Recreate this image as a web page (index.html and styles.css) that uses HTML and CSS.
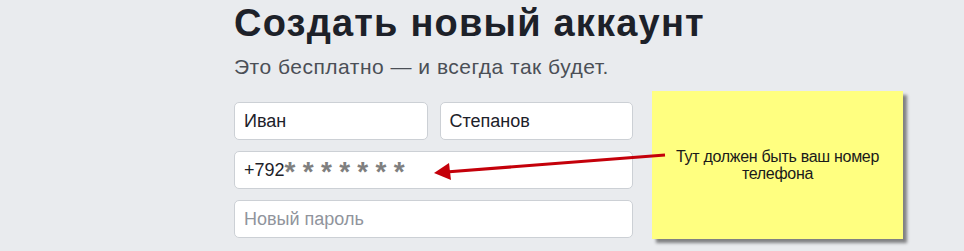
FILE: index.html
```html
<!DOCTYPE html>
<html lang="ru">
<head>
  <meta charset="UTF-8">
  <title>Создать новый аккаунт</title>
  <link rel="stylesheet" href="styles.css">
</head>
<body>
  <div class="signup">
    <h1>Создать новый аккаунт</h1>
    <p class="lead">Это бесплатно — и всегда так будет.</p>

    <div class="form">
      <div class="row">
        <div class="field">Иван</div>
        <div class="field">Степанов</div>
      </div>
      <div class="field">+792<span class="mask">*******</span></div>
      <div class="field placeholder">Новый пароль</div>
    </div>
  </div>

  <!-- sticky note with the hint -->
  <div class="note">
    <p>Тут должен быть ваш номер телефона</p>
  </div>

  <svg class="arrow" width="964" height="251" viewBox="0 0 964 251">
    <line x1="665" y1="155" x2="446" y2="172" stroke="#c4000a" stroke-width="3"/>
    <polygon points="434,173 449,163 451,180" fill="#c4000a"/>
  </svg>
</body>
</html>
```

FILE: styles.css
```css
body {
  margin: 0;
  background: #e9ebee;
  font-family: "Liberation Sans", Arial, sans-serif;
  color: #1d2129;
}
.signup {
  padding-left: 234px;
  width: 399px;
}
h1 {
  margin: 0;
  font-size: 38px;
  line-height: 46px;
  letter-spacing: 1.2px;
  font-weight: bold;
  white-space: nowrap;
}
.lead {
  margin: 8px 0 0;
  font-size: 21px;
  line-height: 25px;
  letter-spacing: 0.5px;
  color: #4b4f56;
  white-space: nowrap;
}
.form {
  display: flex;
  flex-direction: column;
  gap: 11px;
  margin-top: 23px;
}
.row {
  display: flex;
  gap: 12px;
}
.row .field {
  flex: 1;
}
.field {
  height: 38px;
  box-sizing: border-box;
  border: 1px solid #ccd0d5;
  border-radius: 5px;
  background: #fff;
  padding: 0 9px;
  display: flex;
  align-items: center;
  font-size: 18px;
  white-space: nowrap;
}
.placeholder {
  color: #90949c;
}
.mask {
  color: #7f7f7f;
  font-weight: bold;
  font-size: 28px;
  letter-spacing: 7.3px;
  line-height: 28px;
  position: relative;
  top: 2px;
}
.note {
  position: absolute;
  left: 652px;
  top: 91px;
  width: 251px;
  height: 148px;
  background: #ffff80;
  box-shadow: 4px 4px 3px rgba(0, 0, 0, 0.45);
  display: flex;
  align-items: center;
  justify-content: center;
}
.note p {
  margin: 0;
  width: 215px;
  text-align: center;
  font-size: 16px;
  line-height: 17px;
  letter-spacing: -0.3px;
  color: #1a1a1a;
}
.arrow {
  position: absolute;
  left: 0;
  top: 0;
}
```
